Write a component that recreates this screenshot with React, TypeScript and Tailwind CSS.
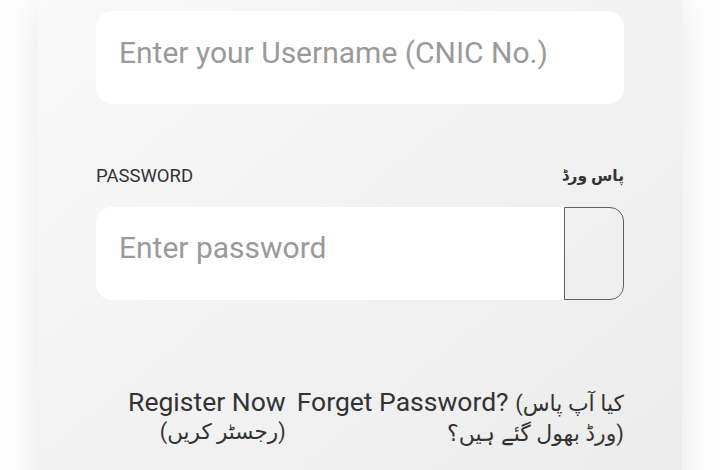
import React from "react";

export default function App() {
  return (
    <div
      className="w-[720px] h-[470px] overflow-hidden bg-white flex justify-center"
      style={{ fontFamily: 'Roboto, "Noto Sans", "DejaVu Sans", sans-serif' }}
    >
      <div className="w-[644px] h-[520px] shrink-0 bg-gradient-to-br from-[#f9f9f9] to-[#ebebeb] shadow-[0_0_40px_rgba(0,0,0,0.10)] px-[58px] pt-[11px]">
        <input
          type="text"
          placeholder="Enter your Username (CNIC No.)"
          className="w-full h-[93px] rounded-2xl bg-white px-[23px] pb-[11px] text-[30px] text-[#333] placeholder:text-[#9a9a9a] outline-none"
        />
        <div className="mt-[61px] flex items-center justify-between text-[#333]">
          <span className="text-[18.5px] leading-[22px]">PASSWORD</span>
          <span dir="rtl" className="text-[15.5px] leading-[22px] font-semibold">پاس ورڈ</span>
        </div>
        <div className="mt-[20px] flex h-[93px]">
          <input
            type="password"
            placeholder="Enter password"
            className="flex-1 min-w-0 h-full rounded-l-2xl bg-white px-[23px] pb-[12px] text-[30px] text-[#333] placeholder:text-[#9a9a9a] outline-none"
          />
          <button className="w-[60px] h-full border border-[#5f5f5f] rounded-r-[14px] bg-transparent" aria-label="toggle password" />
        </div>
        <div className="mt-[87px] flex justify-end gap-[11px] text-[26.5px] leading-[30px] text-[#333]">
          <a className="text-right">
            <div className="whitespace-nowrap">Register Now</div>
            <div className="whitespace-nowrap text-[21.5px]">(رجسٹر کریں)</div>
          </a>
          <a className="text-right">
            <div className="whitespace-nowrap">
              Forget Password? <span className="text-[22px]">(کیا آپ پاس</span>
            </div>
            <div className="whitespace-nowrap text-[22px]">ورڈ بھول گئے ہیں؟)</div>
          </a>
        </div>
      </div>
    </div>
  );
}
